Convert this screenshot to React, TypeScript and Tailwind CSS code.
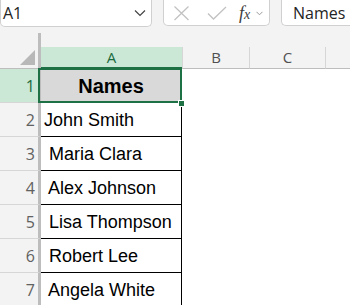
import React from "react";

const ui = { fontFamily: '"Open Sans", "Noto Sans", sans-serif' };
const cellFont = { fontFamily: '"Liberation Sans", Arial, sans-serif' };

const names = ["John Smith", " Maria Clara", " Alex Johnson", " Lisa Thompson", " Robert Lee", " Angela White"];

export default function App() {
  return (
    <div className="w-[350px] h-[305px] overflow-hidden bg-white relative" style={ui}>
      {/* top bar */}
      <div className="flex h-[33px] bg-[#f3f3f3]">
        <div className="w-[152px] h-[27px] bg-white border border-t-0 border-[#d0d0d0] rounded-b-[5px] flex items-center justify-between pl-[2px] pr-[4px]">
          <span className="text-[16px] text-[#242424] leading-none">A1</span>
          <svg width="12" height="8" viewBox="0 0 12 8" className="mr-[1px]">
            <path d="M1 1.5 L6 6.5 L11 1.5" fill="none" stroke="#444" strokeWidth="1.2" />
          </svg>
        </div>
        <div className="ml-[11px] w-[107px] h-[26px] bg-white border border-t-0 border-[#d0d0d0] rounded-b-[5px] flex items-center">
          <svg width="17" height="16" viewBox="0 0 17 16" className="ml-[9px]">
            <path d="M1.5 1.5 L15.5 15 M15.5 1.5 L1.5 15" fill="none" stroke="#c2c2c2" strokeWidth="1.3" />
          </svg>
          <svg width="20" height="14" viewBox="0 0 20 14" className="ml-[17px]">
            <path d="M1 7.5 L6.5 13 L19 1" fill="none" stroke="#c2c2c2" strokeWidth="1.3" />
          </svg>
          <span className="ml-[12px] text-[18px] italic text-[#404040] leading-none" style={{ fontFamily: '"Liberation Serif", serif' }}>
            f<span className="text-[14px]">x</span>
          </span>
          <svg width="7" height="5" viewBox="0 0 7 5" className="ml-[6px] mt-[2px]">
            <path d="M0.5 0.8 L3.5 3.8 L6.5 0.8" fill="none" stroke="#9a9a9a" strokeWidth="1" />
          </svg>
        </div>
        <div className="ml-[11px] flex-1 h-[26px] bg-white border border-t-0 border-r-0 border-[#d0d0d0] rounded-bl-[5px] flex items-center pl-[11px]">
          <span className="text-[16px] text-[#242424] leading-none">Names</span>
        </div>
      </div>

      {/* column header row */}
      <div className="flex h-[36px] bg-[#f3f3f3]">
        <div className="w-[41px] h-full border-r-[3px] border-b border-[#bdbdbd] flex items-end justify-end pr-[3px] pb-[3px]">
          <svg width="15" height="15" viewBox="0 0 15 15">
            <path d="M15 0 L15 15 L0 15 Z" fill="#b8b8b8" />
          </svg>
        </div>
        <div className="flex-1 flex items-end">
          <div className="w-[141px] h-[22px] bg-[#cbe8d6] border-b-2 border-[#1e7145] flex items-center justify-center text-[15px] text-[#1b6b3e] leading-none">
            A
          </div>
          <div className="w-[67px] h-[22px] border-l border-b border-l-[#d6d6d6] border-b-[#bdbdbd] flex items-center justify-center text-[15px] text-[#505050] leading-none">
            B
          </div>
          <div className="w-[76px] h-[22px] border-l border-b border-l-[#d6d6d6] border-b-[#bdbdbd] flex items-center justify-center text-[15px] text-[#505050] leading-none">
            C
          </div>
          <div className="flex-1 h-[22px] border-l border-b border-l-[#d6d6d6] border-b-[#bdbdbd]"></div>
        </div>
      </div>

      {/* row 1 */}
      <div className="flex h-[34px]">
        <div className="w-[41px] h-full bg-[#cbe8d6] border-r-[3px] border-r-[#bdbdbd] border-b border-b-[#d6d6d6] flex items-center justify-end pr-[3px] text-[16px] text-[#1b6b3e]">
          1
        </div>
        <div className="w-[141px] h-full relative bg-[#d9d9d9] border-b border-r border-black flex items-center justify-center">
          <span className="text-[20px] font-bold text-black leading-none" style={cellFont}>Names</span>
          <div className="absolute -left-[3px] -top-[1px] -right-[1px] -bottom-[1px] border-2 border-[#1e7145]"></div>
          <div className="absolute -right-[4px] -bottom-[5px] w-[7px] h-[7px] bg-[#1e7145] border border-white"></div>
        </div>
      </div>

      {names.map((n, i) => (
        <div key={i} className="flex h-[34px]">
          <div className="w-[41px] h-full bg-[#f3f3f3] border-r-[3px] border-r-[#bdbdbd] border-b border-b-[#d6d6d6] flex items-center justify-end pr-[3px] text-[16px] text-[#616161]">
            {i + 2}
          </div>
          <div className="w-[141px] h-full border-b border-r border-black flex items-center pl-[3px]">
            <span className="text-[18px] text-black leading-none whitespace-pre" style={cellFont}>{n}</span>
          </div>
        </div>
      ))}
    </div>
  );
}
